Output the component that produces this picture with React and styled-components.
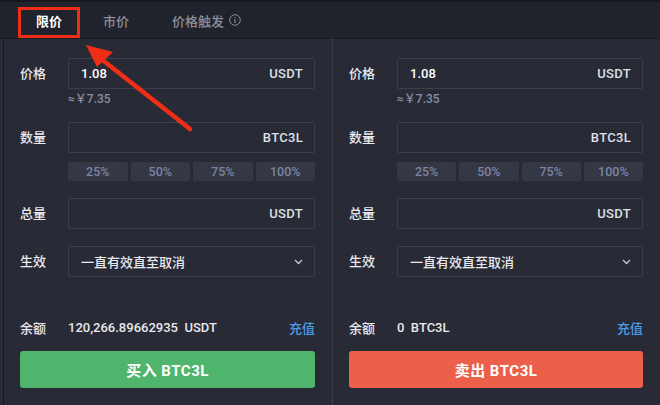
import React from "react";
import styled, { createGlobalStyle } from "styled-components";

const GlobalStyle = createGlobalStyle`
  html, body {
    margin: 0;
    padding: 0;
    background: #282a35;
  }
  body {
    font-family: Roboto, "Noto Sans CJK SC", sans-serif;
  }
`;

const Page = styled.div`
  position: relative;
  width: 660px;
  height: 405px;
  overflow: hidden;
  background: #282a35;
  border-top: 2px solid #16171d;
  box-sizing: border-box;
`;

const Tabs = styled.div`
  display: flex;
  align-items: stretch;
  height: 36px;
  padding-left: 24px;
  background: #21232c;
  border-bottom: 1px solid #1b1d25;
`;

const Tab = styled.div`
  position: relative;
  display: flex;
  align-items: center;
  gap: 5px;
  padding: 0 12px;
  margin-right: ${(p) => (p.active ? 17 : 19)}px;
  font-size: 13px;
  font-weight: ${(p) => (p.active ? 700 : 500)};
  color: ${(p) => (p.active ? "#ffffff" : "#8c8f9b")};
  &::after {
    content: "";
    display: ${(p) => (p.active ? "block" : "none")};
    position: absolute;
    left: 0;
    right: 0;
    bottom: 0;
    height: 2px;
    background: #ffffff;
  }
`;

const Body = styled.div`
  display: grid;
  grid-template-columns: 328px 328px;
  height: 366px;
  margin-left: 3px;
  border-left: 1px solid #16171d;
`;

const Panel = styled.div`
  display: flex;
  flex-direction: column;
  padding: 19px 17px 0 16px;
  border-left: ${(p) => (p.side === "right" ? "1px dotted #4a4d5a" : "none")};
`;

const Row = styled.div`
  display: flex;
  align-items: flex-start;
  margin-bottom: ${(p) => p.mb || 0}px;
`;

const Label = styled.div`
  width: 48px;
  flex: none;
  height: 31px;
  line-height: 31px;
  font-size: 13px;
  font-weight: 500;
  color: #e8e9ee;
`;

const Field = styled.div`
  flex: 1;
  display: flex;
  flex-direction: column;
`;

const Input = styled.div`
  display: flex;
  align-items: center;
  justify-content: space-between;
  height: 31px;
  box-sizing: border-box;
  padding: 0 11px 0 12px;
  border: 1px solid #3c3f4b;
  border-radius: 2px;
  font-size: 13px;
  font-weight: 500;
  color: #ffffff;
`;

const Unit = styled.span`
  color: #dfe1e8;
  font-size: 13px;
  font-weight: 500;
  letter-spacing: 0.3px;
`;

const Hint = styled.div`
  height: 18px;
  line-height: 20px;
  font-size: 12px;
  font-weight: 500;
  color: #8a8fa7;
`;

const Percents = styled.div`
  display: grid;
  grid-template-columns: repeat(4, 1fr);
  gap: 3px;
  margin-top: 9px;
`;

const Pct = styled.div`
  height: 19px;
  line-height: 19px;
  text-align: center;
  font-size: 12.5px;
  font-weight: 500;
  color: #7d84a3;
  background: #343744;
  border-radius: 2px;
`;

const SelectText = styled.span`
  font-size: 13px;
  color: #e8e9ee;
`;

const Balance = styled.div`
  display: flex;
  align-items: center;
  height: 20px;
  margin-top: 40px;
  font-size: 13px;
  color: #e8e9ee;
`;

const BalanceLabel = styled.span`
  width: 48px;
  font-size: 13px;
  font-weight: 500;
`;

const BalanceValue = styled.span`
  flex: 1;
  white-space: pre;
  font-weight: 500;
`;

const Deposit = styled.span`
  color: #4a9ee8;
  font-size: 13px;
  font-weight: 500;
`;

const Action = styled.div`
  display: flex;
  align-items: center;
  justify-content: center;
  height: 37px;
  margin-top: 14px;
  border-radius: 3px;
  background: ${(p) => (p.kind === "buy" ? "#4fb56d" : "#ec5f4a")};
  color: #ffffff;
  font-size: 15px;
  font-weight: 700;
  letter-spacing: 0.5px;
`;

const Annotation = styled.svg`
  position: absolute;
  left: 0;
  top: 0;
  pointer-events: none;
`;

const InfoIcon = () => (
  <svg width="12" height="12" viewBox="0 0 12 12" fill="none">
    <circle cx="6" cy="6" r="5.3" stroke="#8c8f9b" strokeWidth="1" />
    <path d="M6 5v4M6 3v1" stroke="#8c8f9b" strokeWidth="1.1" />
  </svg>
);

const Chevron = () => (
  <svg width="9" height="6" viewBox="0 0 9 6" fill="none">
    <path d="M1 1l3.5 3.5L8 1" stroke="#c9cbd3" strokeWidth="1.3" />
  </svg>
);

const TradePanel = ({ side, balance, action, kind }) => (
  <Panel side={side}>
    <Row mb={15}>
      <Label>价格</Label>
      <Field>
        <Input>
          <span>1.08</span>
          <Unit>USDT</Unit>
        </Input>
        <Hint>≈￥7.35</Hint>
      </Field>
    </Row>
    <Row mb={17}>
      <Label>数量</Label>
      <Field>
        <Input>
          <span />
          <Unit>BTC3L</Unit>
        </Input>
        <Percents>
          {["25%", "50%", "75%", "100%"].map((p) => (
            <Pct key={p}>{p}</Pct>
          ))}
        </Percents>
      </Field>
    </Row>
    <Row mb={17}>
      <Label>总量</Label>
      <Field>
        <Input>
          <span />
          <Unit>USDT</Unit>
        </Input>
      </Field>
    </Row>
    <Row>
      <Label>生效</Label>
      <Field>
        <Input>
          <SelectText>一直有效直至取消</SelectText>
          <Chevron />
        </Input>
      </Field>
    </Row>
    <Balance>
      <BalanceLabel>余额</BalanceLabel>
      <BalanceValue>{balance}</BalanceValue>
      <Deposit>充值</Deposit>
    </Balance>
    <Action kind={kind}>{action}</Action>
  </Panel>
);

export default function App() {
  return (
    <Page>
      <GlobalStyle />
      <Tabs>
        <Tab active>限价</Tab>
        <Tab>市价</Tab>
        <Tab>
          价格触发 <InfoIcon />
        </Tab>
      </Tabs>
      <Body>
        <TradePanel
          side="left"
          balance={"120,266.89662935  USDT"}
          action="买入 BTC3L"
          kind="buy"
        />
        <TradePanel
          side="right"
          balance={"0  BTC3L"}
          action="卖出 BTC3L"
          kind="sell"
        />
      </Body>
      <Annotation width="660" height="405">
        <rect x="19.5" y="6.5" width="59" height="28" fill="none" stroke="#f02d17" strokeWidth="3" />
        <line x1="190" y1="127" x2="100" y2="56" stroke="#f02d17" strokeWidth="4.5" strokeLinecap="round" />
        <polygon points="86,43 113,50 97,65" fill="#f02d17" />
      </Annotation>
    </Page>
  );
}
